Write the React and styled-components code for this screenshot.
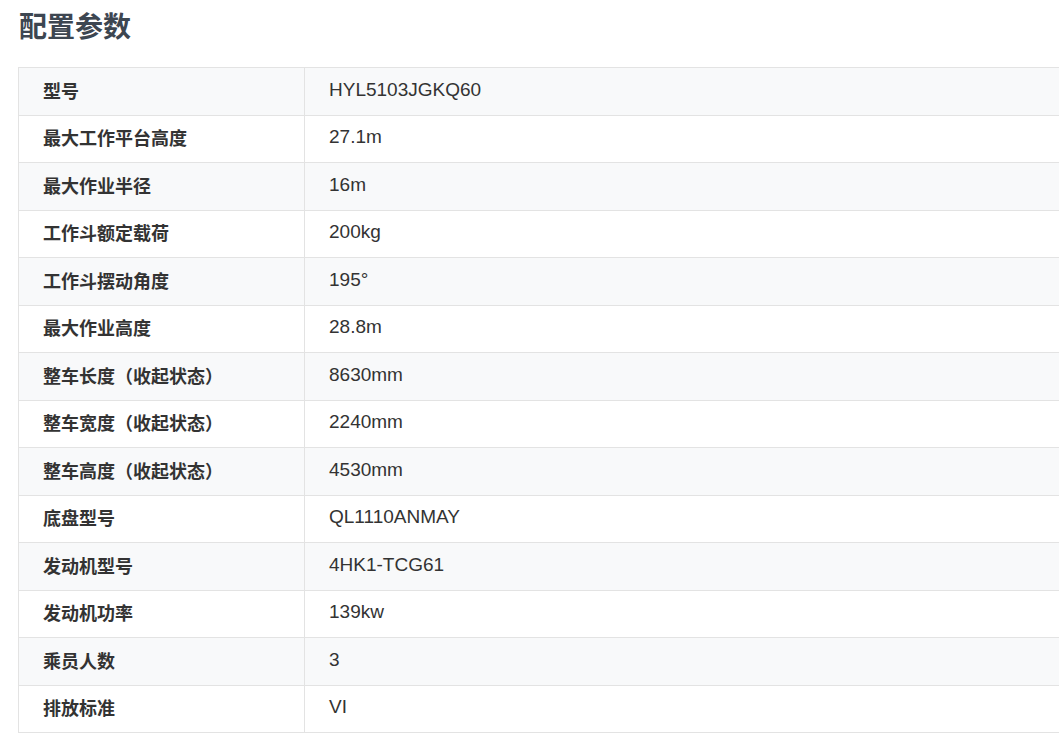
import React from "react"
import styled, { createGlobalStyle } from "styled-components"

const GlobalStyle = createGlobalStyle`
  body {
    margin: 0;
    background: #fff;
    font-family: "Liberation Sans", "Noto Sans CJK SC", sans-serif;
  }
`

const specs = [
  ["型号", "HYL5103JGKQ60"],
  ["最大工作平台高度", "27.1m"],
  ["最大作业半径", "16m"],
  ["工作斗额定载荷", "200kg"],
  ["工作斗摆动角度", "195°"],
  ["最大作业高度", "28.8m"],
  ["整车长度（收起状态）", "8630mm"],
  ["整车宽度（收起状态）", "2240mm"],
  ["整车高度（收起状态）", "4530mm"],
  ["底盘型号", "QL1110ANMAY"],
  ["发动机型号", "4HK1-TCG61"],
  ["发动机功率", "139kw"],
  ["乘员人数", "3"],
  ["排放标准", "VI"],
]

const App = () => (
  <Page>
    <GlobalStyle />
    <Title>配置参数</Title>
    <Table>
      <tbody>
        {specs.map(([k, v], i) => (
          <Row key={k} $striped={i % 2 === 0}>
            <Label>{k}</Label>
            <Value>{v}</Value>
          </Row>
        ))}
      </tbody>
    </Table>
  </Page>
)

export default App

const Page = styled.div`
  padding: 8px 0 0 18px;
  width: 1100px;
`

const Title = styled.h2`
  margin: 0 0 19px 1px;
  font-size: 28px;
  line-height: 40px;
  font-weight: bold;
  color: #3d4651;
`

const Table = styled.table`
  width: 1060px;
  border-collapse: collapse;
  font-size: 18px;
  color: #333;
`

const Row = styled.tr`
  height: 47.5px;
  background: ${p => (p.$striped ? "#f8f9fa" : "#fff")};
`

const Label = styled.td`
  width: 286px;
  padding: 0 24px 3px;
  box-sizing: border-box;
  font-weight: bold;
  border: 1px solid #e3e3e3;
`

const Value = styled.td`
  padding: 0 24px 3px;
  font-size: 19px;
  border: 1px solid #e3e3e3;
`
